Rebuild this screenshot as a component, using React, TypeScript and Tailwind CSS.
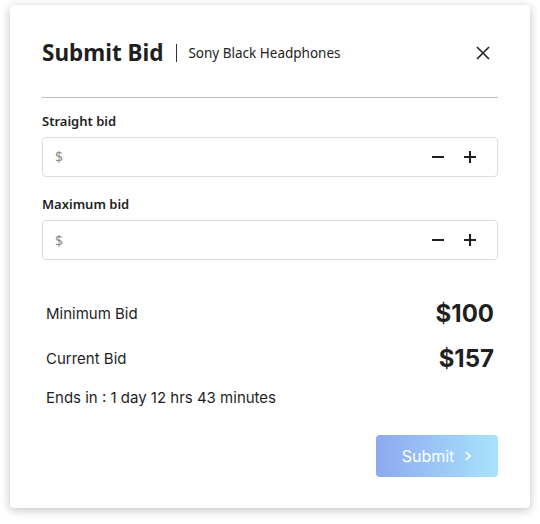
import React from "react";

function BidInput() {
  return (
    <div className="flex h-[40px] items-center rounded-[4px] border border-[#dcdcdc] pl-[12px] pr-[20px]">
      <span className="text-[14px] text-[#8a8a8a]">$</span>
      <input className="min-w-0 flex-1 bg-transparent outline-none" />
      <div className="flex items-center gap-[18px] text-[#1f1f1f]">
        <svg width="14" height="14" viewBox="0 0 14 14">
          <path d="M1 7h12" stroke="currentColor" strokeWidth="2" />
        </svg>
        <svg width="14" height="14" viewBox="0 0 14 14">
          <path d="M1 7h12M7 1v12" stroke="currentColor" strokeWidth="2" />
        </svg>
      </div>
    </div>
  );
}

export default function App() {
  return (
    <div className="min-h-[524px] bg-white px-[10px] pt-[5px] font-['Noto_Sans',sans-serif]">
      <div className="h-[503px] rounded-[4px] bg-white px-[32px] pt-[33px] shadow-[0_2px_10px_rgba(0,0,0,0.25)]">
        {/* Header */}
        <div className="flex h-[30px] items-center">
          <h1 className="text-[22.5px] font-bold text-[#1f1f1f]">Submit Bid</h1>
          <span className="ml-[13px] mr-[11px] h-[18px] w-px bg-[#333]" />
          <span className="text-[13.5px] text-[#222]">Sony Black Headphones</span>
          <button className="ml-auto mr-[8px] text-[#222]">
            <svg width="14" height="14" viewBox="0 0 14 14">
              <path d="M1 1l12 12M13 1L1 13" stroke="currentColor" strokeWidth="1.6" />
            </svg>
          </button>
        </div>
        <div className="mt-[29px] h-px bg-[#bdbdbd]" />

        <div className="mt-[14px] text-[13px] font-semibold text-[#1f1f1f]">Straight bid</div>
        <div className="mt-[5px]">
          <BidInput />
        </div>
        <div className="mt-[18px] text-[13px] font-semibold text-[#1f1f1f]">Maximum bid</div>
        <div className="mt-[6px]">
          <BidInput />
        </div>

        <div className="mt-[38px] px-[4px] font-['Inter',sans-serif] text-[#1f1f1f]">
          <div className="flex h-[32px] items-center justify-between">
            <span className="text-[15px]">Minimum Bid</span>
            <span className="text-[24px] font-bold">$100</span>
          </div>
          <div className="mt-[13px] flex h-[32px] items-center justify-between">
            <span className="text-[15px]">Current Bid</span>
            <span className="text-[24px] font-bold">$157</span>
          </div>
          <div className="mt-[12px] text-[15px]">Ends in : 1 day 12 hrs 43 minutes</div>
        </div>

        <div className="mt-[25px] flex justify-end">
          <button className="flex h-[42px] w-[122px] items-center justify-center gap-[10px] rounded-[4px] bg-gradient-to-r from-[#8ea9ee] to-[#a8e3fd] font-['Inter',sans-serif] text-[16px] text-white">
            Submit
            <svg width="8" height="12" viewBox="0 0 8 12">
              <path d="M2 2l4 4-4 4" stroke="currentColor" strokeWidth="1.6" fill="none" />
            </svg>
          </button>
        </div>
      </div>
    </div>
  );
}
